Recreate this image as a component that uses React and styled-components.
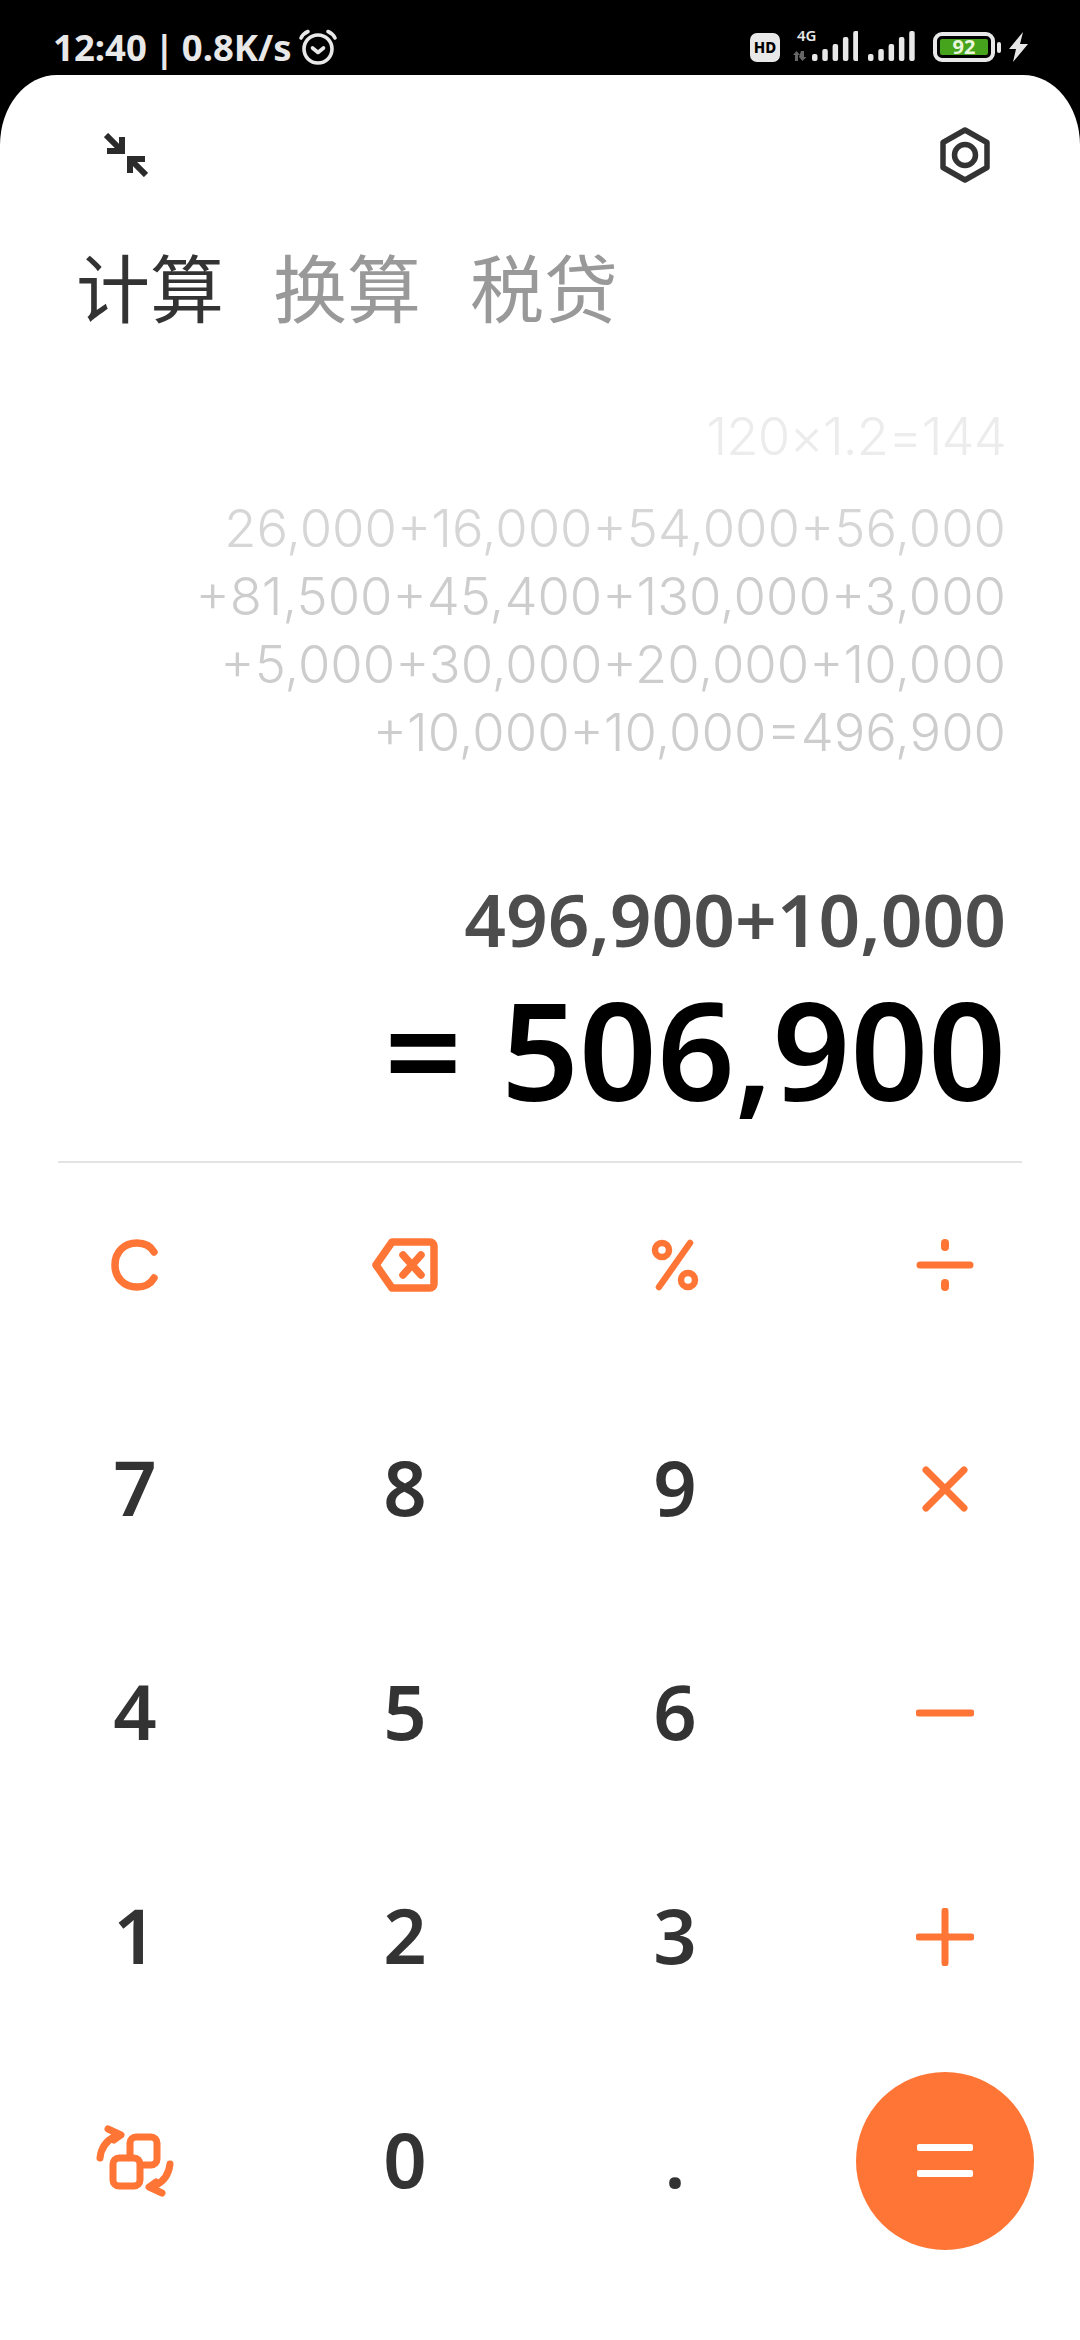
import React from 'react'
import styled, { createGlobalStyle } from 'styled-components'

const ORANGE = '#ff7535'
const UI_FONT = `"Noto Sans", "Noto Sans CJK SC", sans-serif`

const GlobalStyle = createGlobalStyle`
  html, body {
    margin: 0;
    padding: 0;
    background: #000;
  }
  * { box-sizing: border-box; }
`

const Screen = styled.div`
  width: 1080px;
  height: 2340px;
  background: #000;
  display: flex;
  flex-direction: column;
  overflow: hidden;
  font-family: ${UI_FONT};
`

const StatusBar = styled.div`
  height: 75px;
  flex: none;
  padding: 19px 52px 0 53px;
  display: flex;
  align-items: center;
  justify-content: space-between;
  color: #e8e8e8;
`

const StatusLeft = styled.div`
  display: flex;
  align-items: center;
  gap: 6px;
  font-size: 36.5px;
  font-weight: 700;
  word-spacing: -2px;
  line-height: 1;
`

const StatusRight = styled.div`
  display: flex;
  align-items: center;
`

const HdBadge = styled.span`
  width: 30px;
  height: 29px;
  border-radius: 7px;
  background: #e8e8e8;
  color: #000;
  font-size: 15px;
  font-weight: 800;
  display: flex;
  align-items: center;
  justify-content: center;
`

const NetBlock = styled.div`
  position: relative;
  width: 65px;
  height: 32px;
  margin-left: 13px;
`

const NetLabel = styled.span`
  position: absolute;
  left: 4px;
  top: -3px;
  font-size: 15px;
  font-weight: 600;
  line-height: 1;
`

const BarsGroup = styled.svg`
  display: block;
  margin-left: ${p => p.$gap || 0}px;
`

const Battery = styled.div`
  width: 62px;
  height: 30px;
  margin-left: 18px;
  border: 4px solid #e8e8e8;
  border-radius: 9px;
  padding: 3px;
  display: flex;
`

const BatteryFill = styled.div`
  flex: 1;
  background: #46a31c;
  border-radius: 2px;
  color: #eaf7dd;
  font-size: 20px;
  font-weight: 700;
  line-height: 16px;
  text-align: center;
`

const BatteryNub = styled.span`
  width: 4px;
  height: 11px;
  margin-left: 2px;
  border-radius: 2px;
  background: #e8e8e8;
`

const Bolt = styled.svg`
  display: block;
  margin-left: 8px;
`

const Panel = styled.main`
  flex: 1;
  background: #fff;
  border-radius: 57px 57px 0 0 / 70px 70px 0 0;
  display: flex;
  flex-direction: column;
`

const TopBar = styled.div`
  height: 160px;
  padding: 0 89px 0 104px;
  display: flex;
  align-items: center;
  justify-content: space-between;
`

const Tabs = styled.nav`
  height: 100px;
  padding-left: 76px;
  display: flex;
  gap: 49px;
  align-items: center;
`

const Tab = styled.span`
  font-family: "Noto Sans CJK SC", sans-serif;
  font-size: 74px;
  line-height: 100px;
  font-weight: 400;
  color: ${p => (p.$active ? '#333' : '#999')};
`

const Display = styled.section`
  height: 826px;
  padding: 67px 74px 0 0;
  display: flex;
  flex-direction: column;
  align-items: flex-end;
  text-align: right;
`

const HistoryLine = styled.div`
  font-family: Inter, "Noto Sans", sans-serif;
  font-size: 52.5px;
  font-weight: 300;
  line-height: 68px;
  color: ${p => p.$color};
  white-space: nowrap;
`

const PastEntry = styled(HistoryLine)`
  margin-bottom: 24px;
  letter-spacing: -0.8px;
`

const Expression = styled.div`
  margin-top: 105px;
  font-size: 73px;
  font-weight: 600;
  line-height: 96px;
  color: #4d4d4d;
  white-space: nowrap;
`

const Result = styled.div`
  margin-top: 2px;
  font-size: 136px;
  font-weight: 600;
  line-height: 160px;
  color: #000;
  white-space: nowrap;
  word-spacing: 4px;
`

const Divider = styled.hr`
  flex: none;
  height: 2px;
  margin: 0 58px;
  border: 0;
  background: #e3e3e3;
`

const Keypad = styled.div`
  display: grid;
  grid-template-columns: repeat(4, 270px);
  grid-auto-rows: 203px;
  row-gap: 21px;
`

const Key = styled.div`
  display: flex;
  align-items: center;
  justify-content: center;
  font-size: 76px;
  font-weight: 600;
  color: #333;
  line-height: 1;
  padding-bottom: ${p => (p.$digit ? 4 : 0)}px;
`

const EqualsKey = styled.div`
  width: 178px;
  height: 178px;
  border-radius: 50%;
  background: ${ORANGE};
  display: flex;
  flex-direction: column;
  align-items: center;
  justify-content: center;
  gap: 19px;
`

const EqualsBar = styled.span`
  width: 56px;
  height: 7px;
  border-radius: 2px;
  background: #fff;
`

const Icon = ({ w, h, sw = 6, color = ORANGE, children }) => (
  <svg
    width={w}
    height={h}
    viewBox={`0 0 ${w} ${h}`}
    fill="none"
    stroke={color}
    strokeWidth={sw}
    strokeLinecap="round"
    strokeLinejoin="round"
  >
    {children}
  </svg>
)

// five signal bars, rising left to right
const BARS = [7, 12, 17, 24, 30]

const Bars = ({ x = 0 }) =>
  BARS.map((h, i) => (
    <rect key={i} x={x + i * 10.3} y={30 - h} width="5.500" height={h} rx="2" />
  ))

const App = () => (
  <Screen>
    <GlobalStyle />
    <StatusBar>
      <StatusLeft>
        <span>12:40 | 0.8K/s</span>
        <Icon w={40} h={36} sw={3.6} color="#e8e8e8">
          <circle cx="20" cy="20" r="14" />
          <path d="M14.5 19l5.5 4.5 5.5-4.5" />
          <path d="M3 9c1.5-3 3.5-5 7-6.500M37 9c-1.500-3-3.500-5-7-6.500" />
        </Icon>
      </StatusLeft>
      <StatusRight>
        <HdBadge>HD</HdBadge>
        <NetBlock>
          <NetLabel>4G</NetLabel>
          <svg width="65" height="32" viewBox="0 0 65 32" fill="#e8e8e8">
            <path d="M0 25l3.500-4 3.500 4H5v6H2v-6zM8 21h3v6h2.500L9.500 31 6 27z" fill="#666" transform="translate(0 -1)" />
            <Bars x={19} />
          </svg>
        </NetBlock>
        <BarsGroup $gap={10} width="47" height="32" viewBox="0 0 47 32" fill="#e8e8e8">
          <Bars />
        </BarsGroup>
        <Battery>
          <BatteryFill>92</BatteryFill>
        </Battery>
        <BatteryNub />
        <Bolt width="19" height="30" viewBox="0 0 19 30" fill="#e8e8e8">
          <path d="M14 0 0 17h7L4 30l15-18h-8z" />
        </Bolt>
      </StatusRight>
    </StatusBar>

    <Panel>
      <TopBar>
        <Icon w={44} h={44} sw={6} color="#2b2b2b">
          <path d="M2 2l15 15M18 4v14H3" strokeLinecap="butt" strokeLinejoin="miter" />
          <path d="M42 42 27 27M26 40V26h15" strokeLinecap="butt" strokeLinejoin="miter" />
        </Icon>
        <Icon w={52} h={56} sw={5.500} color="#333">
          <path d="M26 3 48 15.500v25L26 53 4 40.500v-25z" />
          <circle cx="26" cy="28" r="10.500" />
        </Icon>
      </TopBar>

      <Tabs>
        <Tab $active>计算</Tab>
        <Tab>换算</Tab>
        <Tab>税贷</Tab>
      </Tabs>

      <Display>
        <PastEntry $color="#ececec">120×1.2=144</PastEntry>
        <HistoryLine $color="#d6d6d6">26,000+16,000+54,000+56,000</HistoryLine>
        <HistoryLine $color="#cdcdcd">+81,500+45,400+130,000+3,000</HistoryLine>
        <HistoryLine $color="#cdcdcd">+5,000+30,000+20,000+10,000</HistoryLine>
        <HistoryLine $color="#cdcdcd">+10,000+10,000=496,900</HistoryLine>
        <Expression>496,900+10,000</Expression>
        <Result>= 506,900</Result>
      </Display>

      <Divider />

      <Keypad>
        <Key>
          <Icon w={48} h={52} sw={7.500}>
            <path d="M43 13C39 6 33 4 26 4 13 4 4 13 4 26s9 22 22 22c7 0 13-2 17-9" />
          </Icon>
        </Key>
        <Key>
          <Icon w={66} h={54} sw={7.500}>
            <path d="M20 4h38c2 0 4 2 4 4v38c0 2-2 4-4 4H20L4 27z" />
            <path d="M31 17l18 20M49 17 31 37" />
          </Icon>
        </Key>
        <Key>
          <Icon w={48} h={52} sw={6.500}>
            <path d="M39 4 8 48" />
            <circle cx="11" cy="11" r="7" />
            <circle cx="37" cy="41" r="7" />
          </Icon>
        </Key>
        <Key>
          <Icon w={58} h={54} sw={7}>
            <path d="M4 27h50" />
            <path d="M29 5v4M29 45v4" strokeWidth="8" />
          </Icon>
        </Key>

        <Key $digit>7</Key>
        <Key $digit>8</Key>
        <Key $digit>9</Key>
        <Key>
          <Icon w={46} h={46} sw={7}>
            <path d="M4 4l38 38M42 4 4 42" />
          </Icon>
        </Key>

        <Key $digit>4</Key>
        <Key $digit>5</Key>
        <Key $digit>6</Key>
        <Key>
          <Icon w={58} h={8} sw={7}>
            <path d="M3 4h52" />
          </Icon>
        </Key>

        <Key $digit>1</Key>
        <Key $digit>2</Key>
        <Key $digit>3</Key>
        <Key>
          <Icon w={58} h={58} sw={7}>
            <path d="M3 29h52M29 3v52" />
          </Icon>
        </Key>

        <Key>
          <Icon w={80} h={72} sw={7}>
            <rect x="35" y="12" width="27" height="28" rx="6" />
            <rect x="18" y="33" width="27" height="28" rx="6" fill="#fff" />
            <path d="M5 33C6 24 11 16 19 12M13 4l13 6-7 5" />
            <path d="M75 39c-1 9-6 17-14 21M67 68l-13-6 7-5" />
          </Icon>
        </Key>
        <Key $digit>0</Key>
        <Key $digit>.</Key>
        <Key>
          <EqualsKey>
            <EqualsBar />
            <EqualsBar />
          </EqualsKey>
        </Key>
      </Keypad>
    </Panel>
  </Screen>
)

export default App
